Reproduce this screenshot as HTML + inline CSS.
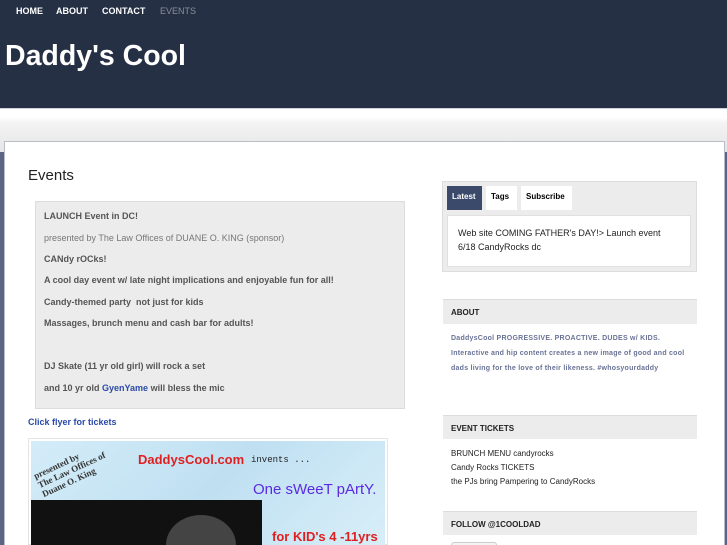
<!DOCTYPE html>
<html><head><meta charset="utf-8"><style>
*{margin:0;padding:0;box-sizing:border-box}
html,body{width:727px;height:545px;overflow:hidden}
body{background:#5b6585;font-family:"Liberation Sans",sans-serif;position:relative}
.abs{position:absolute}
#hdr{left:0;top:0;width:727px;height:108px;background:#263045}
.nav{top:6px;font-size:9px;font-weight:bold;color:#fff}
h1{position:absolute;left:5px;top:40px;font-size:28.5px;color:#fff;font-weight:bold}
#strip{left:0;top:108px;width:727px;height:44px;background:linear-gradient(#fff 0,#fff 8px,#f3f3f3 14px,#e9e9e9 36px,#e6e6e6 44px);border-top:1px solid #cfd3da}
#panel{left:4px;top:141px;width:721px;height:404px;background:#fff;border:1px solid #b8bdc8;border-bottom:none}
.box{left:35px;top:201px;width:370px;height:208px;background:#ececec;border:1px solid #dcdcdc}
.box p{position:absolute;left:8px;font-size:9px;font-weight:bold;color:#555}
.side{background:#ececec;border-top:1px solid #ddd}
.sh{font-size:8px;font-weight:bold;color:#222}
#clip{left:0;top:0;width:727px;height:545px;overflow:hidden}
</style></head><body>
<div id="clip" class="abs">
<div id="hdr" class="abs"></div>
<div class="abs nav" style="left:16px">HOME</div>
<div class="abs nav" style="left:56px">ABOUT</div>
<div class="abs nav" style="left:102px">CONTACT</div>
<div class="abs nav" style="left:160px;color:#8a8f9a;font-weight:normal">EVENTS</div>
<h1>Daddy's Cool</h1>
<div id="strip" class="abs"></div>
<div id="panel" class="abs"></div>
<div class="abs" style="left:28px;top:167px;font-size:15px;color:#222">Events</div>
<div class="abs box">
<p style="top:9px">LAUNCH Event in DC!</p>
<p style="top:31px;font-weight:normal;color:#777">presented by The Law Offices of DUANE O. KING (sponsor)</p>
<p style="top:52px">CANdy rOCks!</p>
<p style="top:73px">A cool day event w/ late night implications and enjoyable fun for all!</p>
<p style="top:95px">Candy-themed party&nbsp; not just for kids</p>
<p style="top:116px">Massages, brunch menu and cash bar for adults!</p>
<p style="top:159px">DJ Skate (11 yr old girl) will rock a set</p>
<p style="top:181px">and 10 yr old <span style="color:#2a4aa8">GyenYame</span> will bless the mic</p>
</div>
<div class="abs" style="left:28px;top:417px;font-size:9px;font-weight:bold;color:#2a4aa8">Click flyer for tickets</div>
<div class="abs" style="left:28px;top:438px;width:360px;height:107px;border:1px solid #e4e4e4;background:#fff"></div>
<div class="abs" style="left:31px;top:441px;width:354px;height:104px;background:linear-gradient(135deg,#d4ecf8,#bfe0f2 50%,#d8eef8);overflow:hidden">
<div class="abs" style="left:0;top:59px;width:231px;height:50px;background:#111"></div>
<div class="abs" style="left:135px;top:74px;width:70px;height:60px;border-radius:50%;background:#444"></div>
<div class="abs" style="left:4px;top:14px;font-size:9px;line-height:10px;color:#333;transform:rotate(-25deg);font-family:'Liberation Serif',serif;font-weight:bold;white-space:nowrap">presented by<br>The Law Offices of<br>Duane O. King</div>
<div class="abs" style="left:107px;top:11px;font-size:13px;color:#e02020;font-weight:bold">DaddysCool.com</div>
<div class="abs" style="left:220px;top:14px;font-size:9px;color:#222;font-family:'Liberation Mono',monospace">invents ...</div>
<div class="abs" style="left:222px;top:40px;font-size:15px;color:#5a2ae0">One sWeeT pArtY.</div>
<div class="abs" style="left:241px;top:88px;font-size:13px;color:#e02020;font-weight:bold">for KID's 4 -11yrs</div>
</div>

<div class="abs side" style="left:442px;top:181px;width:255px;height:91px;border:1px solid #ddd"></div>
<div class="abs" style="left:447px;top:186px;width:35px;height:24px;background:#3b4a6b;color:#fff;font-size:8px;font-weight:bold;padding:6px 0 0 5px">Latest</div>
<div class="abs" style="left:486px;top:186px;width:31px;height:24px;background:#fff;font-size:8px;font-weight:bold;padding:6px 0 0 5px">Tags</div>
<div class="abs" style="left:521px;top:186px;width:51px;height:24px;background:#fff;font-size:8px;font-weight:bold;padding:6px 0 0 5px">Subscribe</div>
<div class="abs" style="left:447px;top:215px;width:244px;height:52px;background:#fff;border:1px solid #e0e0e0;font-size:9px;color:#222;padding:10px 10px;line-height:14px">Web site COMING FATHER's DAY!&gt; Launch event 6/18 CandyRocks dc</div>

<div class="abs side" style="left:443px;top:299px;width:254px;height:25px"><div class="sh" style="padding:8px 8px">ABOUT</div></div>
<div class="abs" style="left:451px;top:331px;width:240px;font-size:7px;font-weight:bold;color:#6a7396;line-height:15px;letter-spacing:0.25px">DaddysCool PROGRESSIVE. PROACTIVE. DUDES w/ KIDS. Interactive and hip content creates a new image of good and cool dads living for the love of their likeness. #whosyourdaddy</div>
<div class="abs side" style="left:443px;top:415px;width:254px;height:24px"><div class="sh" style="padding:8px 8px">EVENT TICKETS</div></div>
<div class="abs" style="left:451px;top:447px;font-size:8px;color:#222;line-height:14px">BRUNCH MENU candyrocks<br>Candy Rocks TICKETS<br>the PJs bring Pampering to CandyRocks</div>
<div class="abs side" style="left:443px;top:511px;width:254px;height:24px"><div class="sh" style="padding:8px 8px">FOLLOW @1COOLDAD</div></div>
<div class="abs" style="left:451px;top:542px;width:46px;height:3px;border:1px solid #ccc;border-bottom:none;border-radius:3px 3px 0 0;background:#f4f4f4"></div>
</div>
</body></html>
